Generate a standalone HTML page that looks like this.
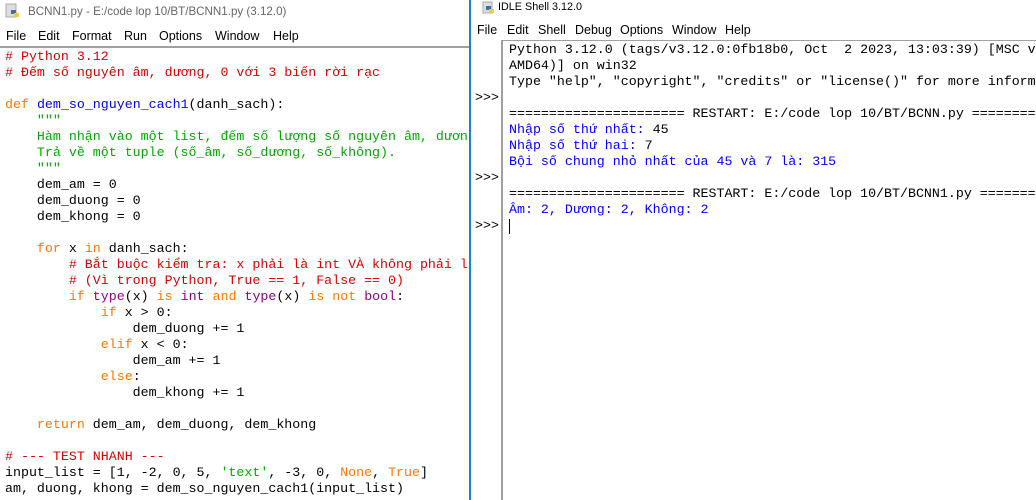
<!DOCTYPE html>
<html><head><meta charset="utf-8"><style>
body{margin:0;width:1036px;height:500px;overflow:hidden;background:#fff;position:relative;font-family:"Liberation Sans",sans-serif}
.abs{position:absolute}
.mono{font-family:"Liberation Mono","Noto Sans CJK SC",monospace;font-size:13.3px;line-height:16px;white-space:pre;color:#000}
.c{color:#dd0000}.k{color:#ff7700}.f{color:#0000ff}.s{color:#00aa00}.b{color:#900090}.o{color:#0000ff}
.m{position:absolute;font-size:12.5px;color:#000;white-space:pre}
</style></head><body>
<!-- left window -->
<svg class="abs" style="left:5px;top:3px" width="16" height="16" viewBox="0 0 16 16"><rect x="1" y="1" width="10" height="13" fill="#ddd" stroke="#aaa"/><path d="M6 7h5v4H6z" fill="#3a72a8"/><path d="M9 10h5v4H9z" fill="#f5c842"/></svg>
<div class="abs" style="left:28px;top:5px;font-size:11.6px;color:#666">BCNN1.py - E:/code lop 10/BT/BCNN1.py (3.12.0)</div>
<div class="m" style="left:6px;top:29px">File</div>
<div class="m" style="left:38px;top:29px">Edit</div>
<div class="m" style="left:72px;top:29px">Format</div>
<div class="m" style="left:124px;top:29px">Run</div>
<div class="m" style="left:159px;top:29px">Options</div>
<div class="m" style="left:215px;top:29px">Window</div>
<div class="m" style="left:273px;top:29px">Help</div>
<div class="abs" style="left:0;top:46px;width:469px;height:2px;background:#a0a0a0"></div>
<div class="abs" style="left:469px;top:0;width:2px;height:500px;background:#1e7fd8"></div>
<div class="abs mono" style="left:5px;top:49px"><span class="c"># Python 3.12</span>
<span class="c"># Đếm số nguyên âm, dương, 0 với 3 biến rời rạc</span>

<span class="k">def</span> <span class="f">dem_so_nguyen_cach1</span>(danh_sach):
    <span class="s">"""</span>
<span class="s">    Hàm nhận vào một list, đếm số lượng số nguyên âm, dươn</span>
<span class="s">    Trả về một tuple (số_âm, số_dương, số_không).</span>
<span class="s">    """</span>
    dem_am = 0
    dem_duong = 0
    dem_khong = 0

    <span class="k">for</span> x <span class="k">in</span> danh_sach:
        <span class="c"># Bắt buộc kiểm tra: x phải là int VÀ không phải l</span>
        <span class="c"># (Vì trong Python, True == 1, False == 0)</span>
        <span class="k">if</span> <span class="b">type</span>(x) <span class="k">is</span> <span class="b">int</span> <span class="k">and</span> <span class="b">type</span>(x) <span class="k">is not</span> <span class="b">bool</span>:
            <span class="k">if</span> x &gt; 0:
                dem_duong += 1
            <span class="k">elif</span> x &lt; 0:
                dem_am += 1
            <span class="k">else</span>:
                dem_khong += 1

    <span class="k">return</span> dem_am, dem_duong, dem_khong

<span class="c"># --- TEST NHANH ---</span>
input_list = [1, -2, 0, 5, <span class="s">'text'</span>, -3, 0, <span class="k">None</span>, <span class="k">True</span>]
am, duong, khong = dem_so_nguyen_cach1(input_list)</div>
<!-- right window -->
<svg class="abs" style="left:482px;top:1px" width="14" height="14" viewBox="0 0 14 14"><rect x="1" y="1" width="9" height="11" fill="#ddd" stroke="#aaa"/><path d="M4 5h5v4H4z" fill="#3a72a8"/><path d="M7 8h5v4H7z" fill="#f5c842"/></svg>
<div class="abs" style="left:498px;top:1px;font-size:10.8px;color:#000">IDLE Shell 3.12.0</div>
<div class="m" style="left:477px;top:23px">File</div>
<div class="m" style="left:507px;top:23px">Edit</div>
<div class="m" style="left:538px;top:23px">Shell</div>
<div class="m" style="left:575px;top:23px">Debug</div>
<div class="m" style="left:620px;top:23px">Options</div>
<div class="m" style="left:672px;top:23px">Window</div>
<div class="m" style="left:725px;top:23px">Help</div>
<div class="abs" style="left:502px;top:40px;width:534px;height:1px;background:#a0a0a0"></div>
<div class="abs" style="left:501px;top:40px;width:2px;height:460px;background:#a0a0a0"></div>
<div class="abs mono" style="left:475px;top:90px;color:#000">&gt;&gt;&gt;</div>
<div class="abs mono" style="left:475px;top:170px">&gt;&gt;&gt;</div>
<div class="abs mono" style="left:475px;top:218px">&gt;&gt;&gt;</div>
<div class="abs mono" style="left:509px;top:42px">Python 3.12.0 (tags/v3.12.0:0fb18b0, Oct  2 2023, 13:03:39) [MSC v
AMD64)] on win32
Type "help", "copyright", "credits" or "license()" for more inform

====================== RESTART: E:/code lop 10/BT/BCNN.py ========
<span class="o">Nhập số thứ nhất: </span>45
<span class="o">Nhập số thứ hai: </span>7
<span class="o">Bội số chung nhỏ nhất của 45 và 7 là: 315</span>

====================== RESTART: E:/code lop 10/BT/BCNN1.py =======
<span class="o">Âm: 2, Dương: 2, Không: 2</span></div>
<div class="abs" style="left:509px;top:219px;width:1px;height:15px;background:#000"></div>
</body></html>
